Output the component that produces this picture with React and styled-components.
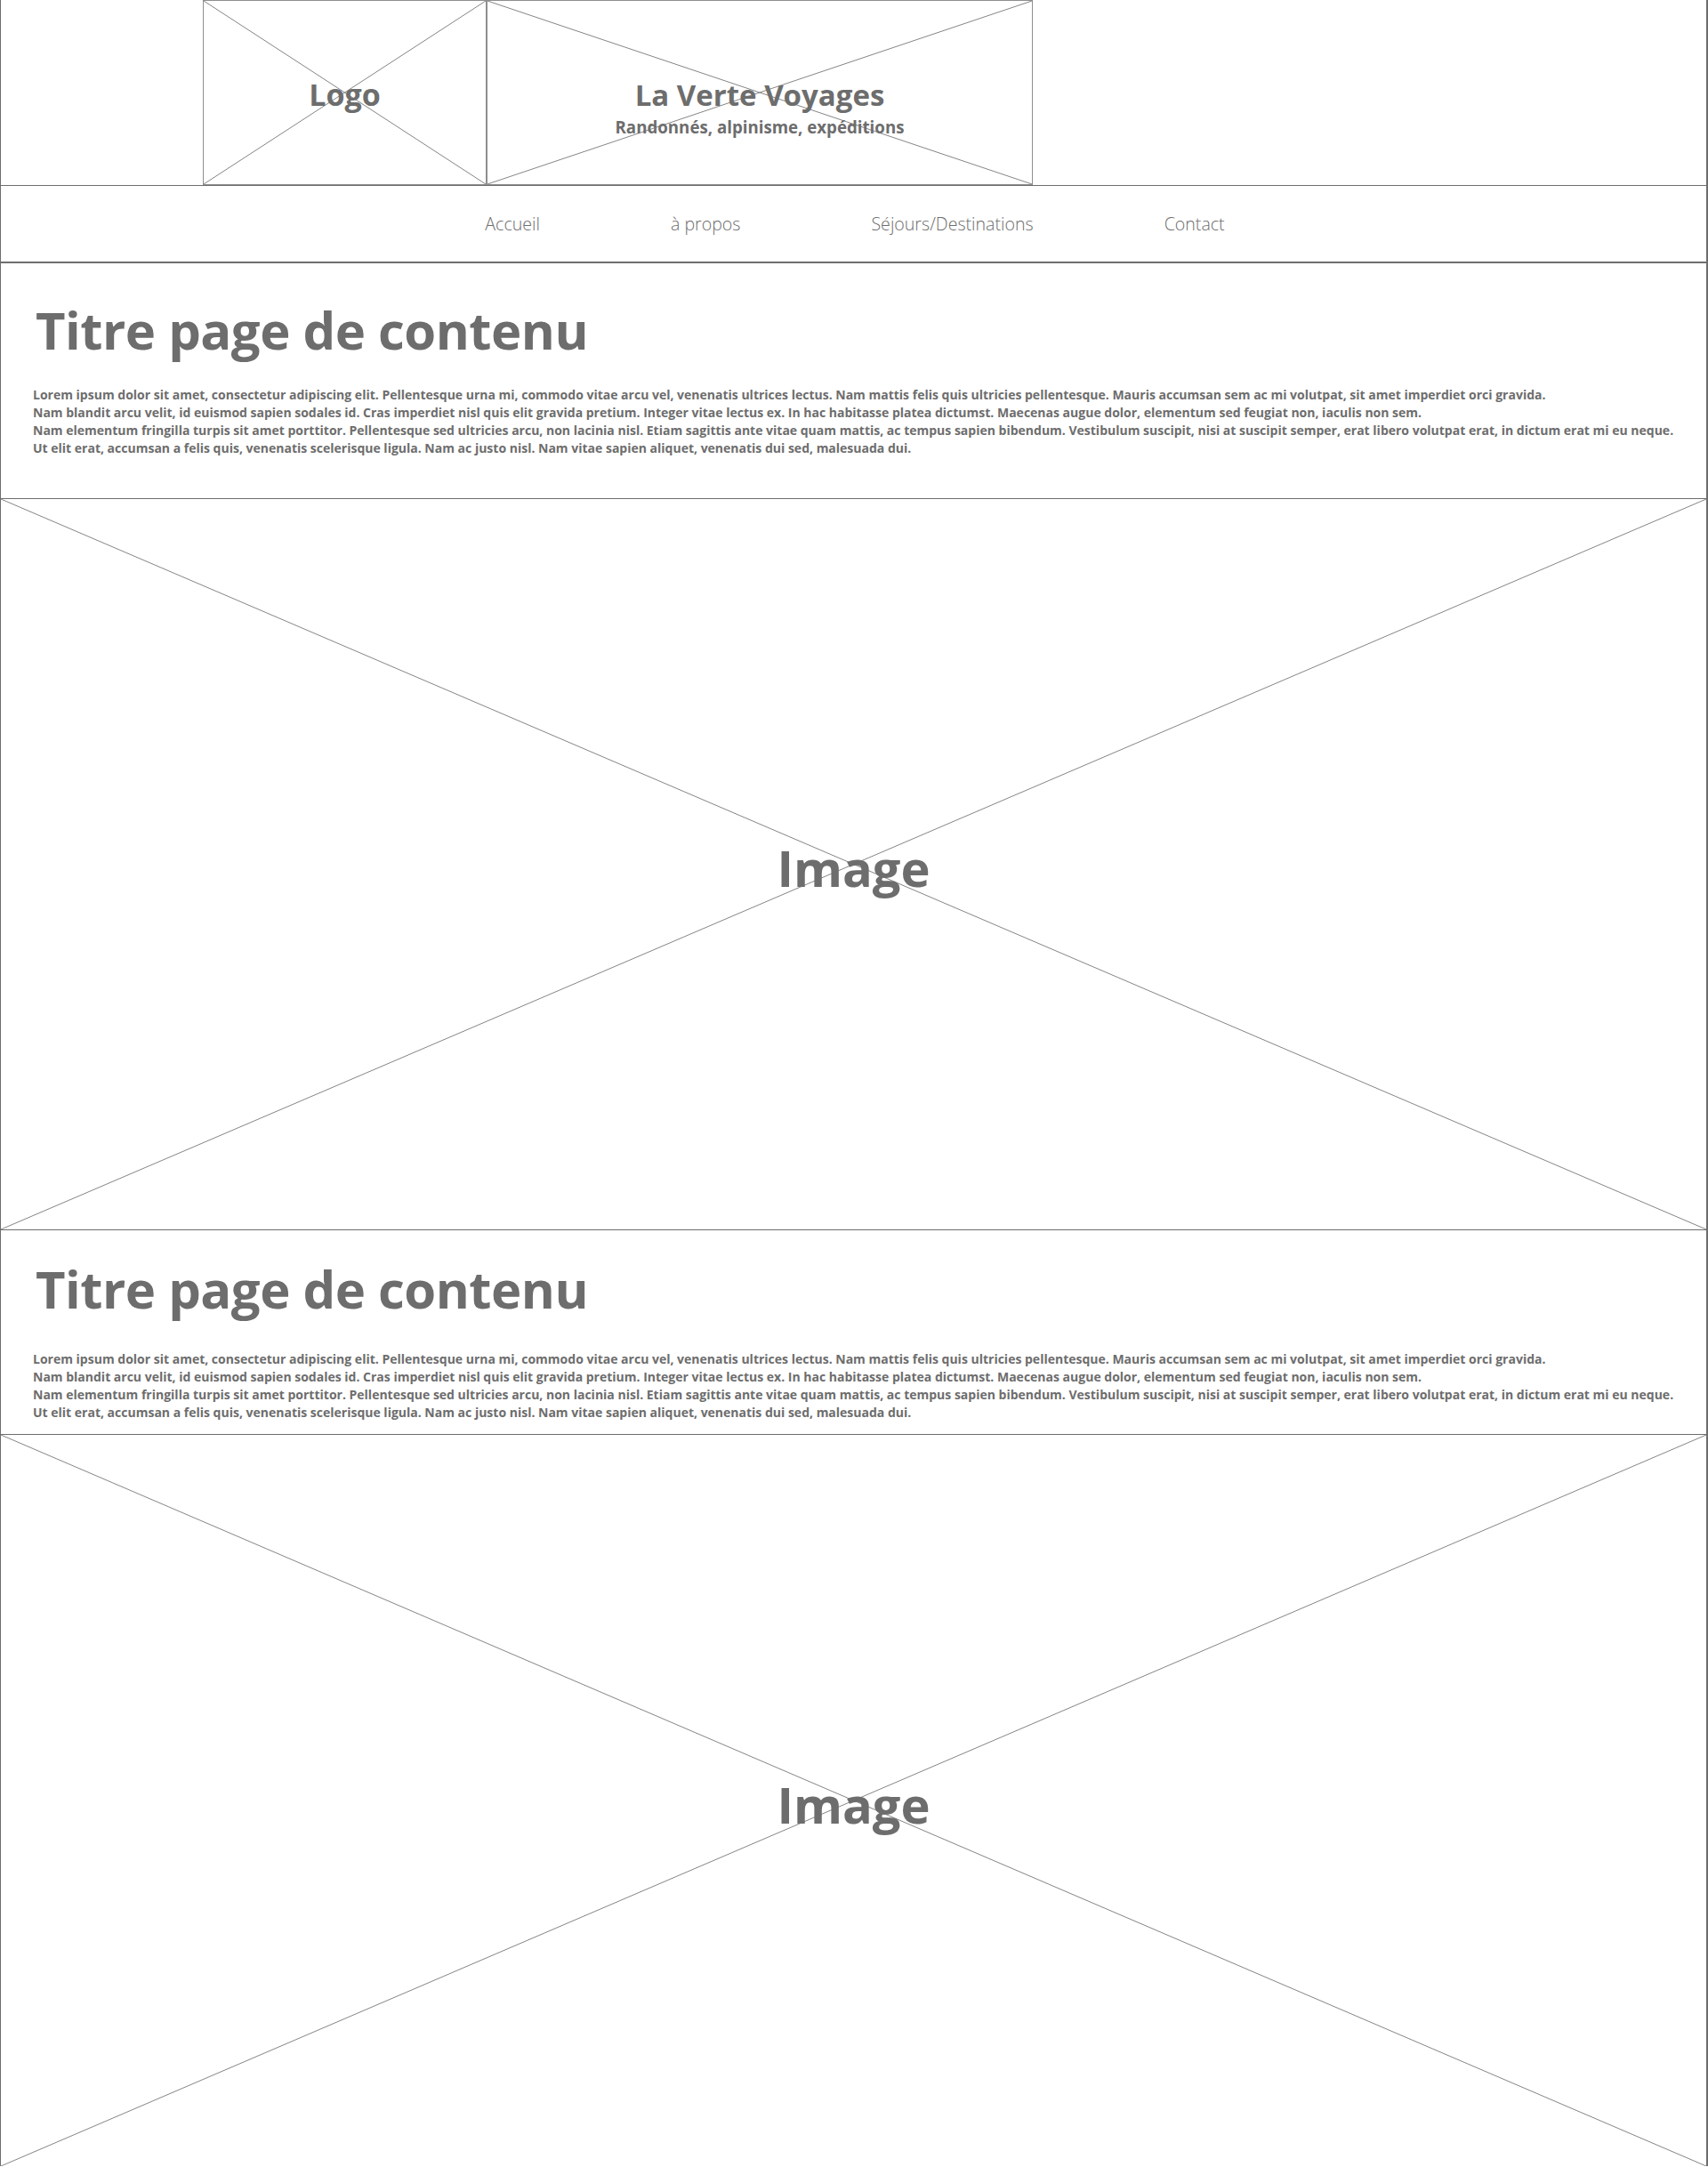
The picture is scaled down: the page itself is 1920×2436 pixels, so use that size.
import React from 'react'
import styled, { createGlobalStyle } from 'styled-components'

const GlobalStyle = createGlobalStyle`
  body {
    margin: 0;
    background: #ffffff;
    font-family: "Open Sans", "Noto Sans", sans-serif;
    color: #6d6d6d;
  }
`

const Page = styled.div`
  width: 1920px;
  box-sizing: border-box;
  border-left: 1px solid #6d6d6d;
  border-right: 2px solid #6d6d6d;
`

const Header = styled.header`
  display: flex;
  height: 208px;
  padding-left: 227px;
`

const Placeholder = styled.div`
  position: relative;
  box-sizing: border-box;
  width: ${p => p.$width}px;
  height: ${p => p.$height}px;
  padding-top: ${p => p.$shift || 0}px;
  border: ${p => (p.$bordered ? '1px solid #8e8e8e' : 'none')};
  border-bottom: ${p => (p.$bottom ? '1px solid #6d6d6d' : p.$bordered ? '1px solid #8e8e8e' : 'none')};
  display: flex;
  flex-direction: column;
  align-items: center;
  justify-content: center;
`

const Cross = styled.svg`
  position: absolute;
  inset: 0;
  width: 100%;
  height: 100%;
`

const BoxLabel = styled.div`
  position: relative;
  font-weight: 700;
  font-size: ${p => p.$size}px;
  line-height: 1.15;
  color: #6d6d6d;
  margin-top: ${p => p.$offset || 0}px;
`

const Nav = styled.nav`
  display: flex;
  justify-content: center;
  align-items: center;
  gap: 147px;
  height: 85px;
  border-top: 1px solid #6d6d6d;
  border-bottom: 2px solid #6d6d6d;
  padding-left: 3px;
`

const NavLink = styled.a`
  font-size: 19.6px;
  font-weight: 300;
  color: #6d6d6d;
  text-decoration: none;
`

const Section = styled.section`
  padding: ${p => p.$top}px 36px ${p => p.$bottom}px;
  border-bottom: 1px solid #6d6d6d;
`

const Title = styled.h1`
  margin: 0 0 0 3px;
  font-size: 58px;
  font-weight: 700;
  letter-spacing: -0.5px;
  line-height: 80px;
  color: #6d6d6d;
`

const Text = styled.p`
  margin: ${p => p.$gap}px 0 0;
  font-size: 14px;
  font-weight: 700;
  line-height: 20px;
  white-space: nowrap;
  color: #6d6d6d;
`

const CrossLines = () => (
  <Cross viewBox="0 0 100 100" preserveAspectRatio="none">
    <line x1="0" y1="0" x2="100" y2="100" stroke="#858585" strokeWidth="1" vectorEffect="non-scaling-stroke" />
    <line x1="100" y1="0" x2="0" y2="100" stroke="#858585" strokeWidth="1" vectorEffect="non-scaling-stroke" />
  </Cross>
)

const lorem = [
  'Lorem ipsum dolor sit amet, consectetur adipiscing elit. Pellentesque urna mi, commodo vitae arcu vel, venenatis ultrices lectus. Nam mattis felis quis ultricies pellentesque. Mauris accumsan sem ac mi volutpat, sit amet imperdiet orci gravida.',
  'Nam blandit arcu velit, id euismod sapien sodales id. Cras imperdiet nisl quis elit gravida pretium. Integer vitae lectus ex. In hac habitasse platea dictumst. Maecenas augue dolor, elementum sed feugiat non, iaculis non sem.',
  'Nam elementum fringilla turpis sit amet porttitor. Pellentesque sed ultricies arcu, non lacinia nisl. Etiam sagittis ante vitae quam mattis, ac tempus sapien bibendum. Vestibulum suscipit, nisi at suscipit semper, erat libero volutpat erat, in dictum erat mi eu neque.',
  'Ut elit erat, accumsan a felis quis, venenatis scelerisque ligula. Nam ac justo nisl. Nam vitae sapien aliquet, venenatis dui sed, malesuada dui.'
]

const links = ['Accueil', 'à propos', 'Séjours/Destinations', 'Contact']

const ContentBlock = ({ top, bottom, gap }) => (
  <Section $top={top} $bottom={bottom}>
    <Title>Titre page de contenu</Title>
    <Text $gap={gap}>
      {lorem.map((line, i) => (
        <React.Fragment key={i}>
          {line}
          {i < lorem.length - 1 && <br />}
        </React.Fragment>
      ))}
    </Text>
  </Section>
)

const ImageBlock = ({ height, last }) => (
  <Placeholder $width={1917} $height={height} $shift={8} $bottom={!last}>
    <CrossLines />
    <BoxLabel $size={56}>Image</BoxLabel>
  </Placeholder>
)

export default function App() {
  return (
    <Page>
      <GlobalStyle />
      <Header>
        <Placeholder $width={319} $height={208} $shift={6} $bordered>
          <CrossLines />
          <BoxLabel $size={34}>Logo</BoxLabel>
        </Placeholder>
        <Placeholder $width={614} $height={208} $shift={33} $bordered>
          <CrossLines />
          <BoxLabel $size={33}>La Verte Voyages</BoxLabel>
          <BoxLabel $size={18.7} $offset={6}>Randonnés, alpinisme, expéditions</BoxLabel>
        </Placeholder>
      </Header>
      <Nav>
        {links.map(l => (
          <NavLink key={l} href="#">{l}</NavLink>
        ))}
      </Nav>
      <ContentBlock top={35} bottom={46} gap={23} />
      <ImageBlock height={822} />
      <ContentBlock top={26} bottom={14} gap={29} />
      <ImageBlock height={822} last />
    </Page>
  )
}
